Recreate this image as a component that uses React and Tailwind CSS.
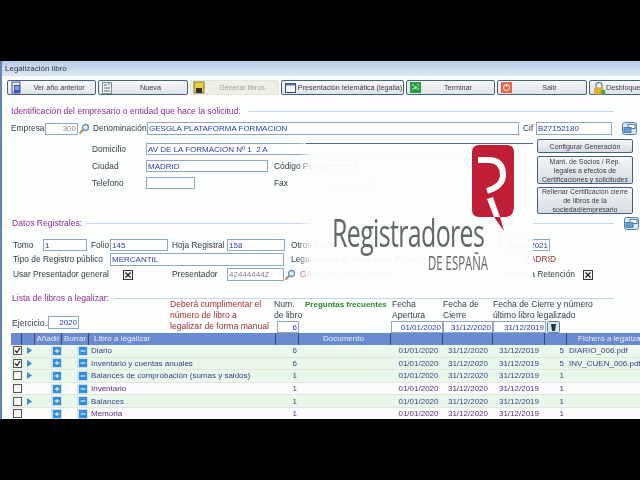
const sans = 'font-["Liberation_Sans",Arial,sans-serif]';

function Icon({ kind }) {
  if (kind === "doc")
    return (
      <svg width="13" height="14" viewBox="0 0 13 14" className="shrink-0">
        <rect x="2" y="1" width="8" height="11" fill="#e8ecf8" stroke="#4050a0" />
        <rect x="4" y="4" width="6" height="8" fill="#3b55b5" />
        <path d="M5 6h4M5 8h4" stroke="#cfe0ff" />
      </svg>
    );
  if (kind === "list")
    return (
      <svg width="13" height="14" viewBox="0 0 13 14" className="shrink-0">
        <rect x="1.5" y="1.5" width="9" height="11" fill="#f2f4f6" stroke="#8a94a0" />
        <path d="M3 4h3M7 3h2M3 7h6M3 10h6" stroke="#5a6a80" />
      </svg>
    );
  if (kind === "save")
    return (
      <svg width="13" height="14" viewBox="0 0 13 14" className="shrink-0">
        <rect x="1" y="1" width="10" height="11" fill="#e8d040" stroke="#807840" />
        <rect x="3" y="7" width="6" height="5" fill="#303030" />
      </svg>
    );
  if (kind === "window")
    return (
      <svg width="13" height="14" viewBox="0 0 13 14" className="shrink-0">
        <rect x="1.5" y="2.5" width="10" height="9" fill="#f6f8fa" stroke="#404a60" />
        <rect x="1.5" y="2.5" width="10" height="2" fill="#5070b0" />
      </svg>
    );
  if (kind === "green")
    return (
      <svg width="13" height="14" viewBox="0 0 13 14" className="shrink-0">
        <rect x="1" y="1" width="11" height="11" fill="#2f9a44" />
        <path d="M3 3l2 2M8 3l2 2M3 9l2-2M8 9l2-2" stroke="#b5eeb5" />
        <circle cx="6.5" cy="6.5" r="1.5" fill="#b5eeb5" />
      </svg>
    );
  if (kind === "power")
    return (
      <svg width="13" height="14" viewBox="0 0 13 14" className="shrink-0">
        <rect x="1" y="1" width="11" height="11" fill="#e0684a" />
        <circle cx="6.5" cy="6.5" r="3" fill="none" stroke="#fff2e0" />
        <path d="M6.5 3v3" stroke="#fff2e0" />
      </svg>
    );
  return (
    <svg width="14" height="14" viewBox="0 0 14 14" className="shrink-0">
      <path d="M4 7V4.5a3 3 0 0 1 6 0V7" fill="none" stroke="#8a8a80" strokeWidth="1.4" />
      <rect x="2" y="6.5" width="9" height="7" rx="1" fill="#e0b030" />
      <circle cx="11" cy="11" r="2.5" fill="#58a848" />
    </svg>
  );
}

function ToolButton({ icon, children, cls, dim, left }) {
  return (
    <div className={`${cls} h-[15px] shrink-0 flex items-center rounded-[2px] border pl-[2px] text-[7.2px] ${dim ? "border-[#e4e4dc] bg-[#f0efe6] text-[#a0a096]" : "border-[#44617f] bg-gradient-to-b from-[#f7f8f9] to-[#dfe4e9] text-[#333c48]"}`}>
      <Icon kind={icon} />
      <span className={`flex-1 whitespace-nowrap ${left ? "" : "text-center"}`}>{children}</span>
    </div>
  );
}

function Input({ cls, children, right, color = "text-[#2a3aa8]" }) {
  return (
    <div className={`${cls} shrink-0 border border-[#8aa8c8] bg-white flex items-center px-[1px] text-[8px] whitespace-nowrap overflow-hidden ${color} ${right ? "justify-end" : ""}`}>
      {children}
    </div>
  );
}

function Heading({ cls, children }) {
  return (
    <div className="h-[12px] flex items-center w-[603px] text-[8.6px]">
      <span className="text-[#8a2f8f] whitespace-nowrap">{children}</span>
      <span className={`${cls} flex-1 h-px bg-[#c6d6e6]`} />
    </div>
  );
}

function Lens() {
  return (
    <svg width="12" height="12" viewBox="0 0 12 12" className="shrink-0">
      <circle cx="7.5" cy="4.5" r="3" fill="#dcecf6" stroke="#6a90b0" strokeWidth="1.3" />
      <path d="M5 7L1.5 10.5" stroke="#b08a40" strokeWidth="2" />
    </svg>
  );
}

function Expand() {
  return (
    <svg width="15" height="13" viewBox="0 0 15 13" className="shrink-0">
      <rect x="0.5" y="0.5" width="14" height="12" rx="2" fill="#d8e8f4" stroke="#4f7ea8" />
      <rect x="6" y="2.5" width="7" height="4" fill="#fff" stroke="#4f7ea8" />
      <rect x="2" y="5.5" width="7" height="5" fill="#5aa0d8" stroke="#4f7ea8" />
    </svg>
  );
}

function SideButton({ cls, children }) {
  return (
    <div className={`${cls} w-[96px] rounded-[2px] border border-[#44617f] bg-gradient-to-b from-[#f5f7f8] to-[#d5dbe1] text-[#333c48] text-[7px] text-center flex items-center justify-center leading-[9px]`}>
      <span>{children}</span>
    </div>
  );
}

function Check({ on, cls }) {
  return (
    <div className={`${cls} w-[9px] h-[9px] shrink-0 border border-[#555] bg-[#f8f8f8] flex items-center justify-center`}>
      {on && (
        <svg width="7" height="7" viewBox="0 0 7 7">
          <path d="M1 3.5l2 2L6 1" fill="none" stroke="#222" strokeWidth="1.3" />
        </svg>
      )}
    </div>
  );
}

function XBox({ cls }) {
  return (
    <div className={`${cls} w-[10px] h-[10px] shrink-0 border border-[#334] bg-[#eef2f6] flex items-center justify-center`}>
      <svg width="6" height="6" viewBox="0 0 6 6">
        <path d="M0.5 0.5l5 5M5.5 0.5l-5 5" stroke="#222" strokeWidth="1.2" />
      </svg>
    </div>
  );
}

const columns = "grid grid-cols-[11px_13px_27px_27px_187px_23px_92px_52px_50px_52px_22px_73px]";

const rows = [
  { on: true, arrow: true, name: "Diario", n: "6", last: "5", file: "DIARIO_006.pdf", bg: "bg-[#e9f8ea]", c: "text-[#333f88]" },
  { on: true, arrow: true, name: "Inventario y cuentas anuales", n: "6", last: "5", file: "INV_CUEN_006.pdf", bg: "bg-[#e9f8ea]", c: "text-[#333f88]" },
  { arrow: true, name: "Balances de comprobación (sumas y saldos)", n: "1", last: "1", file: "", bg: "bg-[#e9f8ea]", c: "text-[#333f88]" },
  { name: "Inventario", n: "1", last: "1", file: "", bg: "bg-[#fbfcfb]", c: "text-[#5b2a80]" },
  { arrow: true, name: "Balances", n: "1", last: "1", file: "", bg: "bg-[#e9f8ea]", c: "text-[#333f88]" },
  { name: "Memoria", n: "1", last: "1", file: "", bg: "bg-[#fbfcfb]", c: "text-[#5b2a80]" },
];

function RoundBtn({ plus }) {
  return (
    <svg width="11" height="10" viewBox="0 0 11 10">
      <rect x="0" y="0" width="11" height="10" fill="#cfe0f0" />
      <rect x="2" y="1" width="8" height="8" fill="#2f8fdc" />
      <path d="M3.5 5h5" stroke="#fff" />
      {plus && <path d="M6 3v4" stroke="#fff" />}
    </svg>
  );
}

function Row({ r }) {
  return (
    <div className={`${columns} ${r.bg} ${r.c} h-[12.6px] text-[8px] items-center border-b border-[#dfe6e0] whitespace-nowrap`}>
      <div className="flex justify-end"><Check on={r.on} /></div>
      <div className="flex justify-center">
        {r.arrow && (
          <svg width="5" height="7" viewBox="0 0 5 7" className="ml-[1px]">
            <path d="M0 0l5 3.5L0 7z" fill="#3c8fc8" />
          </svg>
        )}
      </div>
      <div className="flex justify-end"><RoundBtn plus /></div>
      <div className="flex justify-end pr-[1px]"><RoundBtn /></div>
      <div className="pl-[2px] overflow-hidden">{r.name}</div>
      <div className="text-right pr-[2px]">{r.n}</div>
      <div />
      <div className="text-center pl-[3px]">01/01/2020</div>
      <div className="text-center">31/12/2020</div>
      <div className="text-center">31/12/2019</div>
      <div className="text-right pr-[3px]">{r.last}</div>
      <div className="pl-[2px] overflow-hidden">{r.file}</div>
    </div>
  );
}

export default function App() {
  return (
    <div className={`w-[640px] h-[480px] overflow-hidden bg-black flex flex-col relative text-[8.4px] leading-[11px] text-[#333c48] blur-[0.3px] ${sans}`}>
      <div className="h-[61px] shrink-0" />
      <div className="h-[358px] shrink-0 bg-[#fcfdfd] border-l-2 border-[#5f84b8] overflow-hidden flex flex-col">
        <div className="h-[15px] shrink-0 bg-gradient-to-b from-[#b6cbe3] to-[#dde7f1] pl-[3px] flex items-center text-[#2a3a4c] text-[8px]">
          Legalización libro
        </div>

        <div className="flex pt-[4px] pl-[5px] gap-[2px] h-[23px] shrink-0">
          <ToolButton icon="doc" cls="w-[89px]">Ver año anterior</ToolButton>
          <ToolButton icon="list" cls="w-[90px]">Nueva</ToolButton>
          <ToolButton icon="save" cls="w-[89px]" dim>Generar libros</ToolButton>
          <ToolButton icon="window" cls="w-[123px]">Presentación telemática (legalia)</ToolButton>
          <ToolButton icon="green" cls="w-[89px]">Terminar</ToolButton>
          <ToolButton icon="power" cls="w-[90px]">Salir</ToolButton>
          <ToolButton icon="lock" cls="w-[60px]" left>Desbloquear</ToolButton>
        </div>

        <div className="pl-[9px] flex flex-col">
          <div className="mt-[6px]"><Heading cls="ml-[7px]">Identificación del empresario o entidad que hace la solicitud:</Heading></div>

          <div className="mt-[5px] h-[13px] flex items-center">
            <span className="w-[34px] shrink-0">Empresa</span>
            <Input cls="w-[33px] h-[12px]" right color="text-[#8a8a8a]">300</Input>
            <Lens />
            <span className="ml-[3px] w-[54px] shrink-0 whitespace-nowrap">Denominación</span>
            <Input cls="w-[372px] h-[13px]">GESGLA PLATAFORMA FORMACION</Input>
            <span className="ml-[4px] w-[13px] shrink-0">Cif</span>
            <Input cls="w-[76px] h-[13px]">B27152180</Input>
            <span className="ml-[10px]"><Expand /></span>
          </div>

          <div className="flex">
            <div className="w-[526px] shrink-0 pl-[81px] pt-[8px] flex flex-col">
              <div className="h-[12px] flex items-center">
                <span className="w-[54px] shrink-0">Domicilio</span>
                <Input cls="w-[372px] h-[12px]">AV DE LA FORMACION Nº 1&nbsp; 2 A</Input>
              </div>
              <div className="mt-[5px] h-[12px] flex items-center">
                <span className="w-[54px] shrink-0">Ciudad</span>
                <Input cls="w-[122px] h-[12px]">MADRID</Input>
                <span className="ml-[6px] w-[53px] shrink-0 whitespace-nowrap">Código Postal</span>
                <Input cls="w-[30px] h-[12px]" color="text-[#8a8a8a]">28660</Input>
              </div>
              <div className="mt-[5px] h-[12px] flex items-center">
                <span className="w-[54px] shrink-0">Telefono</span>
                <Input cls="w-[49px] h-[12px]" />
                <span className="ml-[79px] w-[53px] shrink-0">Fax</span>
                <Input cls="w-[49px] h-[12px]" />
              </div>
            </div>
            <div className="pt-[4px] flex flex-col gap-[3px]">
              <SideButton cls="h-[14px]">Configurar Generación</SideButton>
              <SideButton cls="h-[28px]">Mant. de Socios / Rep. legales a efectos de Certificaciones y solicitudes</SideButton>
              <SideButton cls="h-[27px]">Rellenar Certificación cierre de libros de la sociedad/empresario</SideButton>
            </div>
          </div>

          <div className="mt-[3px] flex items-center">
            <Heading cls="ml-[4px]"><span className="pl-[1px]">Datos Registrales:</span></Heading>
            <span className="ml-[10px]"><Expand /></span>
          </div>

          <div className="mt-[9px] h-[12px] flex items-center">
            <span className="ml-[2px] w-[30px] shrink-0">Tomo</span>
            <Input cls="w-[44px] h-[12px]">1</Input>
            <span className="ml-[4px] w-[19px] shrink-0">Folio</span>
            <Input cls="w-[58px] h-[12px]">145</Input>
            <span className="ml-[4px] w-[55px] shrink-0 whitespace-nowrap">Hoja Registral</span>
            <Input cls="w-[58px] h-[12px]">158</Input>
            <span className="ml-[6px] w-[209px] shrink-0">Otros Datos</span>
            <Input cls="w-[50px] h-[12px]" right>18/05/2021</Input>
          </div>

          <div className="mt-[2px] h-[13px] flex items-center">
            <span className="ml-[2px] w-[97px] shrink-0 whitespace-nowrap">Tipo de Registro público</span>
            <Input cls="w-[174px] h-[13px]">MERCANTIL</Input>
            <span className="ml-[7px] w-[232px] shrink-0 whitespace-nowrap">Legalización de libros en el Registro Mercantil de</span>
            <span className="text-[#a83232] whitespace-nowrap">MADRID</span>
          </div>

          <div className="mt-[2px] h-[13px] flex items-center">
            <span className="ml-[2px] w-[110px] shrink-0 whitespace-nowrap">Usar Presentador general</span>
            <XBox />
            <span className="ml-[39px] w-[55px] shrink-0">Presentador</span>
            <Input cls="w-[57px] h-[13px]" color="text-[#7a8490]">42444444Z</Input>
            <Lens />
            <span className="ml-[4px] w-[200px] shrink-0 text-[#a83232] whitespace-nowrap">GARCIA GARCIA MARIA</span>
            <span className="w-[75px] shrink-0 text-right whitespace-nowrap">Sujeto a Retención</span>
            <span className="ml-[8px]"><XBox /></span>
          </div>

          <div className="mt-[11px]"><Heading cls="ml-[4px]"><span className="pl-[1px]">Lista de libros a legalizar:</span></Heading></div>

          <div className="-mt-[6px] h-[35px] flex whitespace-nowrap text-[8.6px]">
            <div className="w-[159px] shrink-0 flex items-end pb-[4px] pl-[1px]">
              <span className="w-[36px] shrink-0">Ejercicio..</span>
              <Input cls="w-[31px] h-[13px]" right>2020</Input>
            </div>
            <div className="w-[104px] shrink-0 text-[#a03030] pt-[1px]">
              Deberá cumplimentar el<br />número de libro a<br />legalizar de forma manual
            </div>
            <div className="w-[31px] shrink-0 flex flex-col pt-[1px]">
              <span>Num.</span>
              <span>de libro</span>
              <Input cls="ml-[3px] mt-auto mb-[1px] w-[22px] h-[12px]" right>6</Input>
            </div>
            <div className="w-[86px] shrink-0 text-[#2a8a2a] font-bold pt-[1px] text-[8px]">Preguntas frecuentes</div>
            <div className="w-[52px] shrink-0 flex flex-col pt-[1px]">
              <span className="pl-[1px]">Fecha</span>
              <span className="pl-[1px]">Apertura</span>
              <Input cls="mt-auto mb-[1px] w-[52px] h-[12px]" right>01/01/2020</Input>
            </div>
            <div className="w-[50px] shrink-0 flex flex-col pt-[1px]">
              <span>Fecha de</span>
              <span>Cierre</span>
              <Input cls="mt-auto mb-[1px] w-[50px] h-[12px]" right>31/12/2020</Input>
            </div>
            <div className="flex flex-col pt-[1px]">
              <span>Fecha de Cierre y número</span>
              <span>último libro legalizado</span>
              <div className="mt-auto mb-[1px] flex items-center">
                <Input cls="w-[53px] h-[12px]" right>31/12/2019</Input>
                <svg width="13" height="12" viewBox="0 0 13 12" className="ml-[1px]">
                  <rect x="0.5" y="0.5" width="12" height="11" rx="1" fill="#d8e8f4" stroke="#4f7ea8" />
                  <path d="M4 3h5l-1 7H5z" fill="#2a3440" />
                </svg>
              </div>
            </div>
          </div>

          <div className={`${columns} h-[12px] bg-[#6b8bd0] text-[#e8eefa] text-[8px] whitespace-nowrap`}>
            <div className="border-r border-[#3a4a70]" />
            <div className="border-r border-[#3a4a70]" />
            <div className="text-center border-r border-[#3a4a70]">Añadir</div>
            <div className="text-center border-r border-[#3a4a70]">Borrar</div>
            <div className="pl-[5px] border-r border-[#3a4a70]">Libro a legalizar</div>
            <div className="border-r border-[#3a4a70]" />
            <div className="pl-[24px] border-r border-[#3a4a70]">Documento</div>
            <div className="border-r border-[#3a4a70]" />
            <div className="border-r border-[#3a4a70]" />
            <div className="border-r border-[#3a4a70]" />
            <div className="border-r border-[#3a4a70]" />
            <div className="pl-[11px] overflow-hidden">Fichero a legalizar</div>
          </div>
          {rows.map((r) => (
            <Row key={r.name} r={r} />
          ))}
        </div>
      </div>
      <div className="flex-1" />

      {/* fading white title card that lies over the form */}
      <div className="absolute left-[298px] top-[143px] w-[235px] h-[140px] bg-gradient-to-r from-transparent via-[#fcfdfd]/95 via-[6%] to-[#fcfdfd]/95">
        <div className="ml-[8px] h-px bg-[#56687e]" />
      </div>
      <svg width="46" height="90" viewBox="0 0 46 90" className="absolute left-[470px] top-[144px]">
        <path d="M9 1H37Q44 1 44 8V62Q44 73 35 73H30L34 87L24 73H9Q2 73 2 66V8Q2 1 9 1Z" fill="#bf1e34" />
        <path d="M17 55L23 53L30 73L24 73Z" fill="#fcfdfd" />
        <path d="M8 16H20Q33 17 33 31Q33 42 17 47" fill="none" stroke="#fcfdfd" strokeWidth="6" />
      </svg>
      <div className="absolute left-[332px] top-[208px] text-[#63666a] text-[39px] leading-[48px] tracking-[-1px] font-medium font-['Open_Sans',sans-serif] origin-left scale-x-[0.64] whitespace-nowrap">
        Registradores
      </div>
      <div className="absolute left-[428px] top-[250px] text-[#63666a] text-[20px] leading-[26px] font-['Open_Sans',sans-serif] origin-left scale-x-[0.57] whitespace-nowrap">
        DE ESPAÑA
      </div>
    </div>
  );
}
